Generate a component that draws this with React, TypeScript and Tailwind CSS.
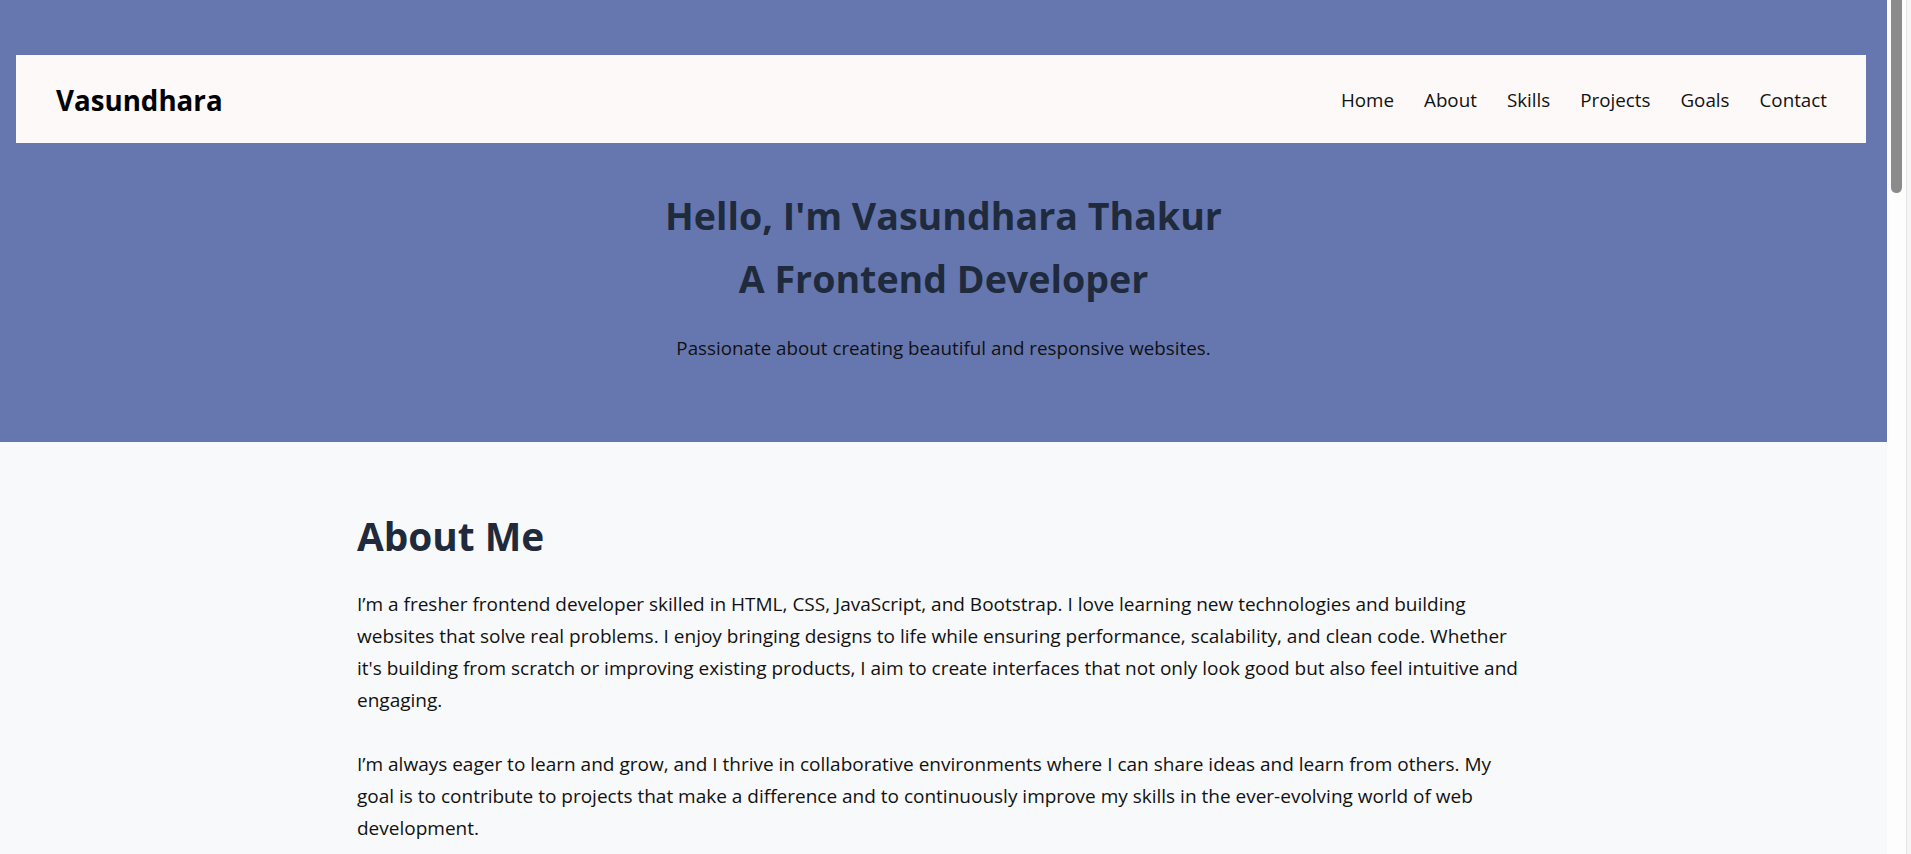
import React from "react";

const links = ["Home", "About", "Skills", "Projects", "Goals", "Contact"];

export default function App() {
  return (
    <div className="flex h-[854px] overflow-hidden font-['Open_Sans',sans-serif]">
      <main className="flex-1 min-w-0 h-[854px] overflow-hidden bg-[#f8f9fb]">
        <header className="bg-[#6677b0] pt-[55px] pb-[80px]">
          <nav className="ml-[16px] mr-[21px] h-[88px] bg-[#fdf9f8] flex items-center justify-between pl-[40px] pr-[39px] pt-[3px]">
            <a className="text-[27.7px] font-bold text-black leading-none">Vasundhara</a>
            <ul className="flex items-center gap-[30px]">
              {links.map((l) => (
                <li key={l}>
                  <a className="text-[18.8px] text-[#111] leading-none">{l}</a>
                </li>
              ))}
            </ul>
          </nav>
          <div className="mt-[41px] text-center">
            <h1 className="text-[37.6px] font-bold leading-[63.3px] text-[#1f2a3c]">
              Hello, I'm Vasundhara Thakur
              <br />
              A Frontend Developer
            </h1>
            <p className="mt-[23px] text-[18.8px] leading-[28px] text-[#111]">
              Passionate about creating beautiful and responsive websites.
            </p>
          </div>
        </header>
        <section className="pt-[71px]">
          <div className="max-w-[1173px] mx-auto">
            <h2 className="text-[38.8px] font-bold leading-[1.2] text-[#1f2a3c]">About Me</h2>
            <p className="mt-[30px] text-[19px] leading-[31.8px] text-[#111]">
              I’m a fresher frontend developer skilled in HTML, CSS, JavaScript, and Bootstrap. I love learning new technologies and building websites that solve real problems. I enjoy bringing designs to life while ensuring performance, scalability, and clean code. Whether it's building from scratch or improving existing products, I aim to create interfaces that not only look good but also feel intuitive and engaging.
            </p>
            <p className="mt-[33px] text-[19px] leading-[31.8px] text-[#111]">
              I’m always eager to learn and grow, and I thrive in collaborative environments where I can share ideas and learn from others. My goal is to contribute to projects that make a difference and to continuously improve my skills in the ever-evolving world of web development.
            </p>
          </div>
        </section>
      </main>
      <aside className="w-[24px] h-[854px] flex bg-[#fdfdfd]">
        <div className="w-[19px] pl-[4px]">
          <div className="w-[11px] h-[193px] rounded-b-full bg-[#8b8b8b]" />
        </div>
        <div className="w-[1px] bg-[#e3e3e3]" />
        <div className="w-[4px] bg-[#f5f5f5]" />
      </aside>
    </div>
  );
}
